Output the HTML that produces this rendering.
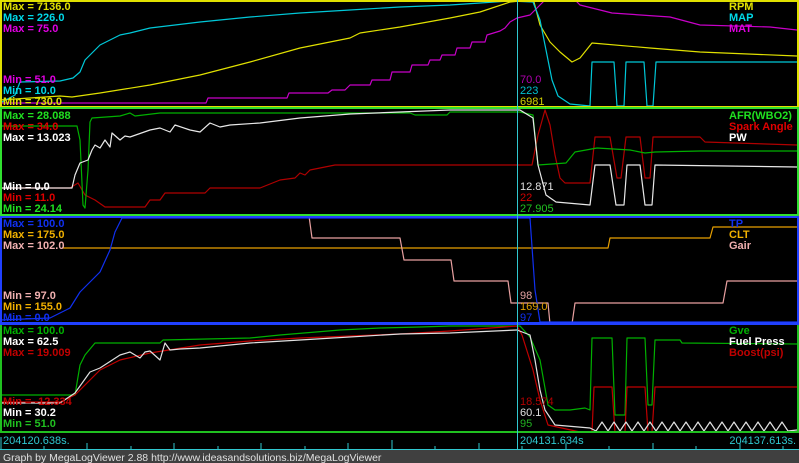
<!DOCTYPE html>
<html><head><meta charset="utf-8"><style>
html,body{margin:0;padding:0;background:#000;width:799px;height:463px;overflow:hidden}
svg{display:block}
text{font-family:"Liberation Sans",Arial,sans-serif;font-size:11px}
.b{font-weight:bold}
</style></head><body>
<svg width="799" height="463" viewBox="0 0 799 463" xmlns="http://www.w3.org/2000/svg">
<rect width="799" height="463" fill="#000"/>
<g fill="none" stroke-width="1.2" stroke-linejoin="round">
<!-- panel 1 -->
<polyline stroke="#c800c8" points="0,103 206,103 208,98 287,98 289,93 328,93 332,90 345,90 350,85 370,85 372,80 390,80 392,72 410,72 412,65 428,65 430,60 440,60 442,55 455,55 457,48 470,48 472,42 485,42 487,35 500,31 505,28 510,22 517,18 530,15 540,5 545,0 575,0 580,5 600,10 612,13 670,17 700,25 770,27 797,30"/>
<polyline stroke="#e0e000" points="0,100 60,96 72,97 100,93 150,85 200,75 250,62 300,48 350,38 360,33 400,27 450,18 480,12 510,2 530,0 534,2 540,25 550,42 560,52 572,62 580,58 592,43 650,48 700,52 797,56"/>
<polyline stroke="#00c8d8" points="0,103 15,95 20,82 60,81 73,78 80,72 85,60 90,55 100,45 120,35 130,33 150,28 200,22 250,17 300,13 350,10 400,7 450,5 480,3 510,1 533,2 540,20 546,50 552,80 558,96 570,104 590,106 592,62 614,62 617,106 624,106 626,62 644,62 647,106 653,106 656,62 797,62"/>
<!-- panel 2 -->
<polyline stroke="#b00000" points="0,188 70,188 78,183 85,195 95,200 105,207 145,207 150,200 160,200 165,193 205,193 210,188 260,188 280,180 295,178 300,173 305,175 310,170 320,168 335,165 532,165 538,135 545,110 550,125 555,155 560,178 565,183 590,183 595,137 610,137 617,178 621,178 626,137 640,137 645,178 650,178 653,137 700,137 705,142 797,145"/>
<polyline stroke="#00b000" points="0,126 77,126 80,140 83,205 85,208 88,170 90,122 92,118 120,116 130,113 135,116 160,113 410,113 415,115 447,115 450,112 520,112 533,115 538,165 566,163 575,152 597,148 630,150 645,153 655,152 700,151 797,151"/>
<polyline stroke="#e8e8e8" points="0,188 72,188 75,175 80,163 88,160 92,150 95,145 100,148 105,140 110,147 112,133 120,140 125,136 130,137 150,130 160,128 170,132 175,125 190,130 200,132 210,123 220,127 230,125 260,123 300,118 350,114 400,112 450,110 520,110 533,118 538,165 546,195 556,202 590,205 595,165 610,165 616,205 624,205 627,165 640,165 645,205 652,205 655,165 797,167"/>
<!-- panel 3 -->
<polyline stroke="#e8a000" points="62,248 608,248 610,238 710,238 713,227 797,227"/>
<polyline stroke="#e8a0a0" points="0,216 309,216 312,238 400,238 404,260 451,260 454,281 508,281 511,303 548,303 550,324 572,324 575,303 723,303 727,281 797,281"/>
<polyline stroke="#1030f0" points="0,320 50,318 70,308 80,292 100,272 110,250 115,232 122,218 530,218 535,290 540,322 797,322"/>
<!-- panel 4 -->
<polyline stroke="#00b000" points="0,395 75,395 80,365 85,355 95,343 160,343 163,340 250,338 280,335 340,330 380,328 420,327 450,326 520,326 530,337 540,360 548,405 555,410 570,410 585,408 590,410 592,338 612,338 615,415 625,415 627,338 645,338 648,405 652,405 655,340 680,340 682,343 797,344"/>
<polyline stroke="#c00000" points="0,402 60,402 75,395 90,380 100,370 120,360 150,353 200,345 250,341 300,338 400,334 450,331 517,326 522,335 533,370 540,400 548,425 580,432 592,432 594,387 612,387 615,432 625,432 627,387 645,387 648,432 652,432 655,387 797,387"/>
<polyline stroke="#e0e0e0" points="0,403 60,403 75,393 90,372 100,368 120,355 130,352 140,358 145,352 150,351 160,360 165,343 170,350 180,349 200,348 250,343 300,340 400,334 450,333 517,330 530,335 535,360 540,390 545,410 555,425 590,428 596,431 602,422 608,431 614,422 620,431 626,422 632,431 638,422 644,431 650,422 656,431 662,422 668,431 674,422 680,431 686,422 692,431 698,422 704,431 710,422 716,431 722,422 728,431 734,422 740,431 746,422 752,431 758,422 764,431 770,422 776,431 782,422 788,431 797,430"/>
</g>
<!-- borders -->
<g fill="none" stroke-width="2">
<rect x="1" y="1" width="797" height="106" stroke="#e0e000"/>
<rect x="1" y="108" width="797" height="107" stroke="#30e030"/>
<rect x="1" y="217" width="797" height="106" stroke="#2040ff"/>
<rect x="1" y="324" width="797" height="108" stroke="#20c020"/>
<line x1="0" y1="324" x2="799" y2="324" stroke="#2040ff"/>
</g>
<line x1="517.5" y1="0" x2="517.5" y2="450" stroke="#30c8d0" stroke-width="1"/>
<!-- labels -->
<g class="b">
<text x="3" y="10" fill="#e0e000" class="b">Max = 7136.0</text>
<text x="3" y="21" fill="#00d8e8" class="b">Max = 226.0</text>
<text x="3" y="32" fill="#e000e0" class="b">Max = 75.0</text>
<text x="3" y="83" fill="#e000e0" class="b">Min = 51.0</text>
<text x="3" y="94" fill="#00d8e8" class="b">Min = 10.0</text>
<text x="3" y="105" fill="#e0e000" class="b">Min = 730.0</text>
<text x="3" y="119" fill="#20e020" class="b">Max = 28.088</text>
<text x="3" y="130" fill="#e00000" class="b">Max = 34.0</text>
<text x="3" y="141" fill="#ffffff" class="b">Max = 13.023</text>
<text x="3" y="190" fill="#ffffff" class="b">Min = 0.0</text>
<text x="3" y="201" fill="#e00000" class="b">Min = 11.0</text>
<text x="3" y="212" fill="#20e020" class="b">Min = 24.14</text>
<text x="3" y="227" fill="#1030f0" class="b">Max = 100.0</text>
<text x="3" y="238" fill="#f0b000" class="b">Max = 175.0</text>
<text x="3" y="249" fill="#f0b0b0" class="b">Max = 102.0</text>
<text x="3" y="299" fill="#f0b0b0" class="b">Min = 97.0</text>
<text x="3" y="310" fill="#f0b000" class="b">Min = 155.0</text>
<text x="3" y="321" fill="#1030f0" class="b">Min = 0.0</text>
<text x="3" y="334" fill="#00b000" class="b">Max = 100.0</text>
<text x="3" y="345" fill="#ffffff" class="b">Max = 62.5</text>
<text x="3" y="356" fill="#c00000" class="b">Max = 19.009</text>
<text x="3" y="405" fill="#c00000" class="b">Min = -12.334</text>
<text x="3" y="416" fill="#ffffff" class="b">Min = 30.2</text>
<text x="3" y="427" fill="#20c020" class="b">Min = 51.0</text>
<text x="729" y="10" fill="#e0e000" class="b">RPM</text>
<text x="729" y="21" fill="#00d8e8" class="b">MAP</text>
<text x="729" y="32" fill="#e000e0" class="b">MAT</text>
<text x="729" y="119" fill="#20e020" class="b">AFR(WBO2)</text>
<text x="729" y="130" fill="#e00000" class="b">Spark Angle</text>
<text x="729" y="141" fill="#ffffff" class="b">PW</text>
<text x="729" y="227" fill="#1030f0" class="b">TP</text>
<text x="729" y="238" fill="#f0b000" class="b">CLT</text>
<text x="729" y="249" fill="#f0b0b0" class="b">Gair</text>
<text x="729" y="334" fill="#00b000" class="b">Gve</text>
<text x="729" y="345" fill="#ffffff" class="b">Fuel Press</text>
<text x="729" y="356" fill="#c00000" class="b">Boost(psi)</text>
</g>
<g>
<text x="520" y="83" fill="#b000b0">70.0</text>
<text x="520" y="94" fill="#00c0d0">223</text>
<text x="520" y="105" fill="#d0d000">6981</text>
<text x="520" y="190" fill="#e0e0e0">12.871</text>
<text x="520" y="201" fill="#d00000">22</text>
<text x="520" y="212" fill="#20c020">27.905</text>
<text x="520" y="299" fill="#e0a0a0">98</text>
<text x="520" y="310" fill="#e0a000">169.0</text>
<text x="520" y="321" fill="#1030f0">97</text>
<text x="520" y="405" fill="#b00000">18.574</text>
<text x="520" y="416" fill="#e0e0e0">60.1</text>
<text x="520" y="427" fill="#20b020">95</text>
</g>
<!-- time axis -->
<g stroke="#30c8d0" stroke-width="1">
<line x1="1" y1="437" x2="1" y2="450"/>
<line x1="44" y1="446" x2="44" y2="450"/><line x1="87" y1="443" x2="87" y2="450"/>
<line x1="131" y1="446" x2="131" y2="450"/><line x1="174" y1="443" x2="174" y2="450"/>
<line x1="218" y1="446" x2="218" y2="450"/><line x1="261" y1="443" x2="261" y2="450"/>
<line x1="305" y1="446" x2="305" y2="450"/><line x1="348" y1="443" x2="348" y2="450"/>
<line x1="392" y1="440" x2="392" y2="450"/><line x1="435" y1="446" x2="435" y2="450"/>
<line x1="479" y1="443" x2="479" y2="450"/><line x1="522" y1="446" x2="522" y2="450"/>
<line x1="566" y1="443" x2="566" y2="450"/><line x1="609" y1="446" x2="609" y2="450"/>
<line x1="653" y1="443" x2="653" y2="450"/><line x1="696" y1="446" x2="696" y2="450"/>
<line x1="740" y1="443" x2="740" y2="450"/><line x1="783" y1="446" x2="783" y2="450"/>
<line x1="0" y1="449.5" x2="799" y2="449.5"/>
</g>
<text x="3" y="444" fill="#30c8d0">204120.638s.</text>
<text x="520" y="444" fill="#30c8d0">204131.634s</text>
<text x="796" y="444" fill="#30c8d0" text-anchor="end">204137.613s.</text>
<rect x="0" y="450" width="799" height="13" fill="#404040"/>
<text x="3" y="461" fill="#e0e0e0" style="font-size:10.5px">Graph by MegaLogViewer 2.88 http://www.ideasandsolutions.biz/MegaLogViewer</text>
</svg>
</body></html>
